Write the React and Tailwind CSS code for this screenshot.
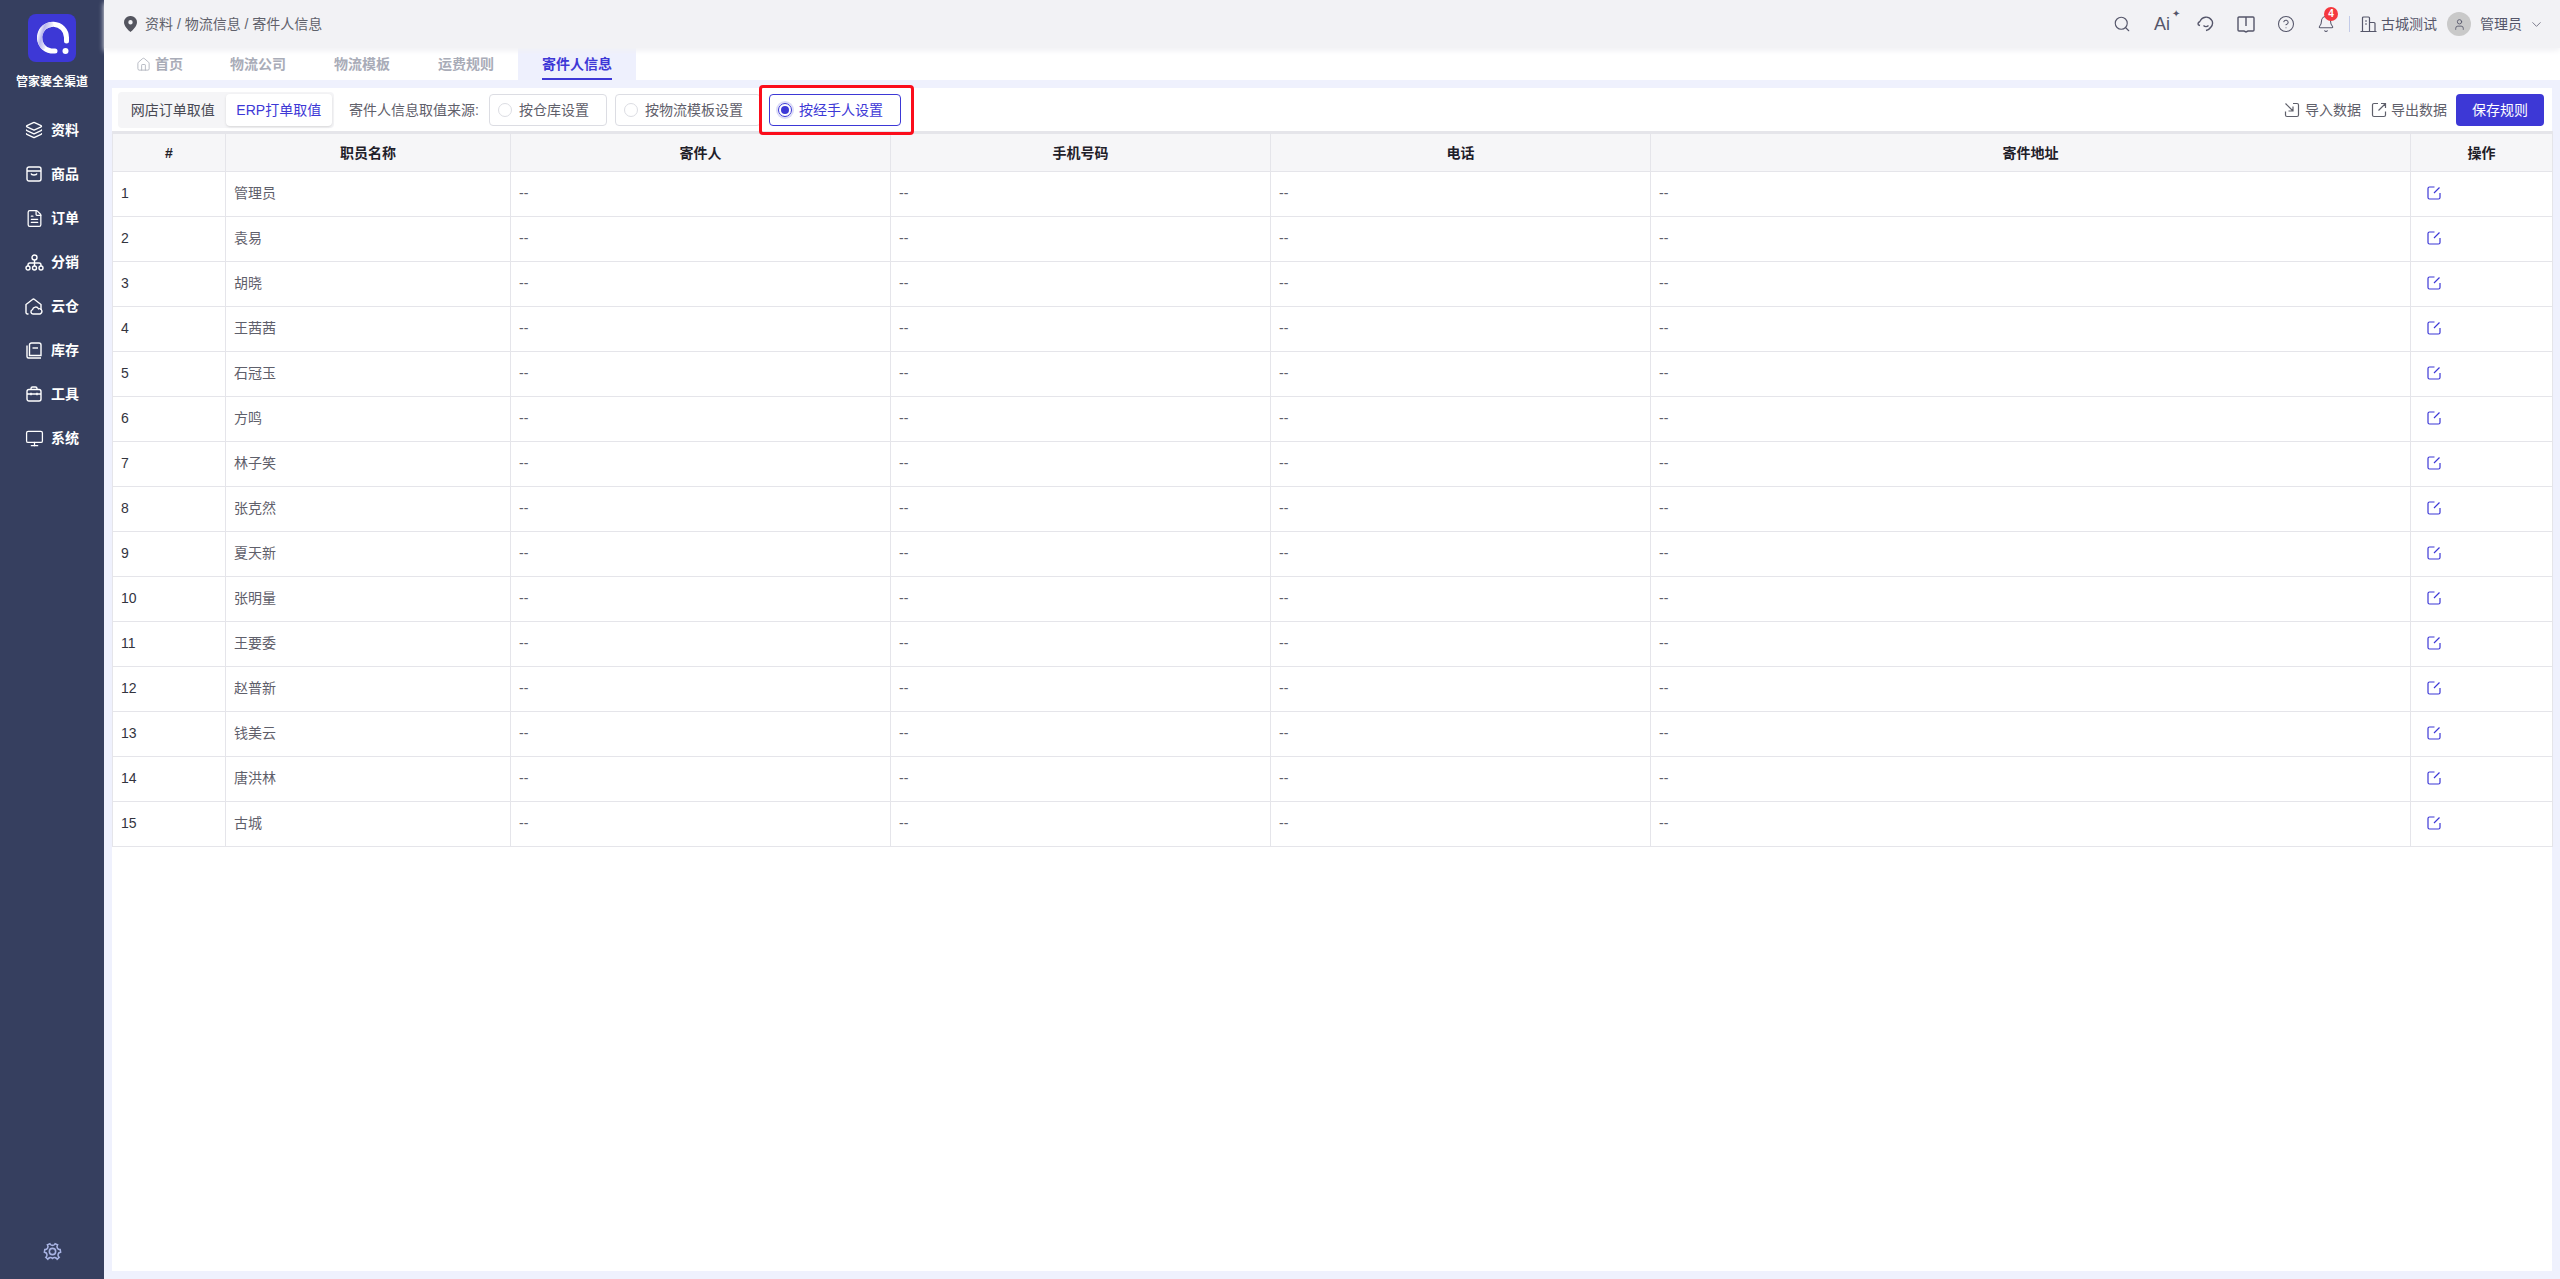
import { Layers, FileText, Search, CircleHelp, Bell, ChevronDown, User, Home, Monitor } from 'lucide-react';

const font = { fontFamily: '"Liberation Sans", "Noto Sans CJK SC", sans-serif' };

const staff = ['管理员', '袁易', '胡晓', '王茜茜', '石冠玉', '方鸣', '林子笑', '张克然', '夏天新', '张明量', '王要委', '赵普新', '钱美云', '唐洪林', '古城'];

function BagIcon() {
    return (
        <svg width="16" height="16" viewBox="0 0 16 16" fill="none" stroke="currentColor" strokeWidth="1.4">
            <rect x="1" y="1" width="14" height="14" rx="2" />
            <path d="M1 5h14M5 7.500c.5 2 5.500 2 6 0" />
        </svg>
    );
}

function BranchIcon() {
    return (
        <svg width="19" height="17" viewBox="0 0 19 17" fill="none" stroke="currentColor" strokeWidth="1.4">
            <circle cx="9.500" cy="3.500" r="2.500" />
            <circle cx="3" cy="14" r="2" />
            <circle cx="9.500" cy="14" r="2" />
            <circle cx="16" cy="14" r="2" />
            <path d="M9.500 6v6M3 12V11a2 2 0 0 1 2-2h9a2 2 0 0 1 2 2v1" />
        </svg>
    );
}

function CloudHouseIcon() {
    return (
        <svg width="18" height="17" viewBox="0 0 18 17" fill="none" stroke="currentColor" strokeWidth="1.4">
            <path d="M3.500 16H2.500A1.500 1.500 0 0 1 1 14.500V6.500L7.500 1.500a1.500 1.500 0 0 1 2 0L16 6.500V12" />
            <path d="M8 16a2.200 2.200 0 0 1-.5-4.300 3.200 3.200 0 0 1 6-.9 2.600 2.600 0 0 1 1.500 5.200z" />
        </svg>
    );
}

function StockIcon() {
    return (
        <svg width="16" height="17" viewBox="0 0 16 17" fill="none" stroke="currentColor" strokeWidth="1.4">
            <path d="M1 3.500v11A1.500 1.500 0 0 0 2.500 16H15" />
            <path d="M3.500 13.500V3A2 2 0 0 1 5.500 1h7.500A2 2 0 0 1 15 3v10.500z" />
            <path d="M6.500 6h5.500" />
        </svg>
    );
}

function ToolboxIcon() {
    return (
        <svg width="16" height="16" viewBox="0 0 16 16" fill="none" stroke="currentColor" strokeWidth="1.4">
            <rect x="1" y="3.500" width="14" height="11.500" rx="2" />
            <path d="M5 3.500V2.500A1.500 1.500 0 0 1 6.500 1h3A1.500 1.500 0 0 1 11 2.500v1M1 8h14M5 6.800v2.400M11 6.800v2.400" />
        </svg>
    );
}

function GearIcon() {
    return (
        <svg width="21" height="21" viewBox="0 0 20 20" fill="none" stroke="#a9b4e4" strokeWidth="1.500">
            <path d="M7.500 2.600a2.800 2.800 0 0 0 5 0l2.300 1.100a2.800 2.800 0 0 0 2.500 4.400l.4 2.500a2.800 2.800 0 0 0-1.400 5l-1.800 1.800a2.800 2.800 0 0 0-4.500-.8 2.800 2.800 0 0 0-4.500.8l-1.800-1.800a2.800 2.800 0 0 0-1.400-5l.4-2.500a2.800 2.800 0 0 0 2.500-4.400z" />
            <circle cx="10" cy="10" r="3" />
        </svg>
    );
}

function Logo() {
    return (
        <div className="w-12 h-12 rounded-lg bg-[#3d38d6]">
            <svg width="48" height="48" viewBox="0 0 48 48" fill="none">
                <defs>
                    <linearGradient id="logoShade" x1="0" y1="0" x2="1" y2="0.6">
                        <stop offset="0" stopColor="#ffffff" />
                        <stop offset="0.35" stopColor="#b9b7ee" />
                        <stop offset="1" stopColor="#ffffff" />
                    </linearGradient>
                </defs>
                <path d="M27 37H23A13.500 13.500 0 1 1 38.500 23.500V27" stroke="#ffffff" strokeWidth="5" strokeLinecap="round" />
                <path d="M15 33C9 25 12 12 23 10.500" stroke="url(#logoShade)" strokeWidth="5" strokeLinecap="round" />
                <circle cx="37.500" cy="37" r="3" fill="#ffffff" />
            </svg>
        </div>
    );
}

function Sidebar() {
    const items = [
        ['资料', <Layers size={18} strokeWidth={1.7} />],
        ['商品', <BagIcon />],
        ['订单', <FileText size={19} strokeWidth={1.6} />],
        ['分销', <BranchIcon />],
        ['云仓', <CloudHouseIcon />],
        ['库存', <StockIcon />],
        ['工具', <ToolboxIcon />],
        ['系统', <Monitor size={19} strokeWidth={1.6} />],
    ];
    return (
        <aside className="w-[104px] shrink-0 bg-[#363f5f] flex flex-col items-center text-white">
            <div className="mt-[14px]"><Logo /></div>
            <div className="mt-[9px] text-xs font-bold leading-[22px]">管家婆全渠道</div>
            <nav className="mt-[15px] w-full flex flex-col">
                {items.map(([label, icon]) => (
                    <div key={label} className="h-11 flex items-center pl-[26px] gap-[9px]">
                        <span className="w-[16px] flex justify-center [&>svg]:shrink-0">{icon}</span>
                        <span className="text-sm font-bold">{label}</span>
                    </div>
                ))}
            </nav>
            <div className="mt-auto mb-[17px]"><GearIcon /></div>
        </aside>
    );
}

function Header() {
    return (
        <header className="relative z-10 h-12 shrink-0 bg-[#f2f2f5] shadow-[0_3px_5px_#f2f2f5] flex items-center pl-5 pr-[16px] text-sm text-[#60616b]">
            <svg width="13" height="16" viewBox="0 0 13 16" fill="#54555f">
                <path fillRule="evenodd" d="M6.500 0A6.300 6.300 0 0 1 13 6.200C13 10 8.500 14.500 6.500 16 4.500 14.500 0 10 0 6.200A6.300 6.300 0 0 1 6.500 0zm0 4a2.200 2.200 0 1 0 0 4.400 2.200 2.200 0 0 0 0-4.400z" />
            </svg>
            <span className="ml-2">资料 / 物流信息 / 寄件人信息</span>
            <div className="ml-auto flex items-center text-[#55566a]">
                <Search size={18} strokeWidth={1.5} />
                <span className="ml-[23px] w-[20px] text-[18px] leading-none relative">
                    Ai
                    <span className="absolute -top-[6px] right-[-6px] text-[10px]">✦</span>
                </span>
                <svg className="ml-[23px]" width="18" height="18" viewBox="0 0 18 18" fill="none" stroke="currentColor" strokeWidth="1.4">
                    <path d="M3 6.500a6.500 6.500 0 0 1 11.500-1.500M14.500 5c1.500 1.500 1.500 5 -.5 7-1 1.500-2.500 3-5 3.500M3 6.500C1.500 7 .5 8.500 1.500 10l1.500.5M6.500 10.500c1.500 1.500 3.500 1.500 5 0" />
                </svg>
                <svg className="ml-[22px]" width="18" height="17" viewBox="0 0 18 17" fill="none" stroke="currentColor" strokeWidth="1.4">
                    <path d="M2 1h14a1 1 0 0 1 1 1v12a1 1 0 0 1-1 1h-5l-2 1-2-1H2a1 1 0 0 1-1-1V2a1 1 0 0 1 1-1zM9 1v9" />
                </svg>
                <CircleHelp className="ml-[22px]" size={18} strokeWidth={1.4} />
                <div className="ml-[22px] relative">
                    <Bell size={18} strokeWidth={1.4} />
                    <span className="absolute -top-[8px] left-[7px] w-[14px] h-[14px] rounded-full bg-[#f5383e] text-white text-[10px] font-bold flex items-center justify-center">4</span>
                </div>
                <div className="ml-[14px] w-px h-4 bg-[#c3cbe8]" />
                <svg className="ml-[10px]" width="17" height="17" viewBox="0 0 17 17" fill="none" stroke="currentColor" strokeWidth="1.2">
                    <path d="M.5 15.500h16M2.500 15.500V2a1 1 0 0 1 1-1h5a1 1 0 0 1 1 1v13.500M9.500 6.500H14a1 1 0 0 1 1 1v8M5 5h2M5 8h2" />
                </svg>
                <span className="ml-[4px]">古城测试</span>
                <div className="ml-[10px] w-6 h-6 rounded-full bg-[#c9c9c9] flex items-center justify-center">
                    <User size={13} strokeWidth={1.6} />
                </div>
                <span className="ml-[9px]">管理员</span>
                <ChevronDown className="ml-[7px]" size={15} strokeWidth={1.2} />
            </div>
        </header>
    );
}

function Tabs() {
    return (
        <div className="h-8 shrink-0 bg-white flex text-sm font-bold text-[#a9acb8] pl-[32px] leading-8">
            <div className="flex items-center gap-1 w-[94px]">
                <Home size={15} strokeWidth={1.3} />
                <span>首页</span>
            </div>
            <div className="w-[104px]">物流公司</div>
            <div className="w-[104px]">物流模板</div>
            <div className="w-[80px]">运费规则</div>
            <div className="bg-[#eef0fd] w-[118px] flex justify-center">
                <span className="text-[#3d38d6] border-b-2 border-[#3d38d6] h-8">寄件人信息</span>
            </div>
        </div>
    );
}

function Radio({ label, checked, box }) {
    return (
        <div className={`relative h-8 flex items-center pl-2 pr-[17px] rounded border text-sm ${checked ? 'border-[#3d38d6] text-[#3d38d6]' : 'border-[#dcdde3] text-[#5f606b]'}`}>
            {box && <div className="absolute -left-[11px] -top-[10px] -right-[14px] -bottom-[10px] border-[3px] border-[#fb0d1b] rounded" />}
            {checked ? (
                <span className="w-[14px] h-[14px] rounded-full border border-[#3d38d6] ring-2 ring-[#dcdcf7] flex items-center justify-center">
                    <span className="w-2 h-2 rounded-full bg-[#3d38d6]" />
                </span>
            ) : (
                <span className="w-[14px] h-[14px] rounded-full border border-[#dcdde3]" />
            )}
            <span className="ml-[7px]">{label}</span>
        </div>
    );
}

function Toolbar() {
    return (
        <div className="h-[43px] shrink-0 flex items-center pl-[6px] pr-2 text-sm text-[#5f606b]">
            <div className="h-9 w-[216px] flex items-center rounded bg-[#f5f5f7] px-[2px]">
                <span className="w-[106px] text-center text-[#484953]">网店订单取值</span>
                <span className="w-[107px] h-8 leading-8 text-center rounded bg-white text-[#3d38d6] shadow-sm">ERP打单取值</span>
            </div>
            <span className="ml-[15px] mr-2 w-[132px]">寄件人信息取值来源:</span>
            <Radio label="按仓库设置" />
            <div className="ml-2"><Radio label="按物流模板设置" /></div>
            <div className="ml-2"><Radio label="按经手人设置" checked box /></div>
            <div className="ml-auto flex items-center">
                <svg width="16" height="16" viewBox="0 0 16 16" fill="none" stroke="#5f606b" strokeWidth="1.200">
                    <path d="M9 1.500h4A1.500 1.500 0 0 1 14.500 3v10a1.500 1.500 0 0 1-1.500 1.500H3A1.500 1.500 0 0 1 1.500 13V9.500M1.500 1.500 9 9M9 4.500V9H4.500" />
                </svg>
                <span className="ml-[5px]">导入数据</span>
                <svg className="ml-[10px]" width="16" height="16" viewBox="0 0 16 16" fill="none" stroke="#5f606b" strokeWidth="1.200">
                    <path d="M7 1.500H3A1.500 1.500 0 0 0 1.500 3v10A1.500 1.500 0 0 0 3 14.500h10a1.500 1.500 0 0 0 1.500-1.500V9.500M14.500 1.500 7.500 8.500M10 1.500h4.500V6" />
                </svg>
                <span className="ml-[4px]">导出数据</span>
                <button className="ml-[9px] w-[88px] h-8 rounded bg-[#3d38d6] text-white">保存规则</button>
            </div>
        </div>
    );
}

function EditIcon() {
    return (
        <svg width="14" height="14" viewBox="0 0 14 14" fill="none" stroke="#3d38d6" strokeWidth="1.200">
            <path d="M7.500 1H2.500A1.500 1.500 0 0 0 1 2.500v9A1.500 1.500 0 0 0 2.500 13h9a1.500 1.500 0 0 0 1.500-1.500V7M12.500 1.500 7 7" />
        </svg>
    );
}

function StaffTable() {
    const th = 'border border-[#e5e5ea] bg-[#f6f6f8] font-bold text-[#1f2029] text-sm text-center';
    const td = 'border border-[#e5e5ea] px-2 pb-[2px] text-sm text-[#5f606b]';
    return (
        <table className="table-fixed border-collapse w-[2440px] border-t-[3px] border-[#e5e5ea]">
            <colgroup>
                <col className="w-[113px]" />
                <col className="w-[285px]" />
                <col className="w-[380px]" />
                <col className="w-[380px]" />
                <col className="w-[380px]" />
                <col className="w-[760px]" />
                <col className="w-[142px]" />
            </colgroup>
            <thead>
                <tr className="h-[39px]">
                    <th className={th}>#</th>
                    <th className={th}>职员名称</th>
                    <th className={th}>寄件人</th>
                    <th className={th}>手机号码</th>
                    <th className={th}>电话</th>
                    <th className={th}>寄件地址</th>
                    <th className={th}>操作</th>
                </tr>
            </thead>
            <tbody>
                {staff.map((name, i) => (
                    <tr key={name} className="h-[45px]">
                        <td className={`${td} text-[#33343e]`}>{i + 1}</td>
                        <td className={td}>{name}</td>
                        <td className={td}>--</td>
                        <td className={td}>--</td>
                        <td className={td}>--</td>
                        <td className={td}>--</td>
                        <td className={`${td} pl-[16px]`}><EditIcon /></td>
                    </tr>
                ))}
            </tbody>
        </table>
    );
}

export default function App() {
    return (
        <div className="h-[1279px] flex overflow-hidden" style={font}>
            <Sidebar />
            <main className="flex-1 min-w-0 flex flex-col bg-[#eff1fd]">
                <Header />
                <Tabs />
                <div className="flex-1 min-h-0 pt-2 pl-2 pr-2 pb-2">
                    <div className="h-full bg-white flex flex-col">
                        <Toolbar />
                        <StaffTable />
                    </div>
                </div>
            </main>
        </div>
    );
}
